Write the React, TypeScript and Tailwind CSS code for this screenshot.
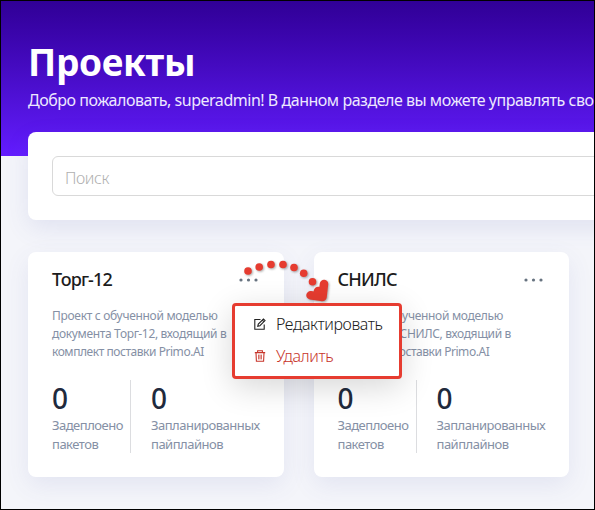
import type { ReactNode } from "react";

function Dots() {
  return (
    <svg width="19" height="4" viewBox="0 0 19 4" className="mt-[26px] shrink-0" fill="#677380">
      <circle cx="2" cy="2" r="1.6" />
      <circle cx="9.5" cy="2" r="1.6" />
      <circle cx="17" cy="2" r="1.6" />
    </svg>
  );
}

function EditIcon() {
  return (
    <svg width="12" height="12" viewBox="0 0 12 12" className="shrink-0" fill="none" stroke="#222" strokeWidth="1.1">
      <path d="M6.5 1.5H.8v9.8h9.4V6.5" />
      <path d="M3.8 8.2l.5-2.1L9.4 1l1.6 1.6L5.9 7.7z" />
      <path d="M8.3 2.1l1.6 1.6" />
    </svg>
  );
}

function TrashIcon() {
  return (
    <svg width="12" height="12" viewBox="0 0 12 12" className="shrink-0" fill="none" stroke="#c7352b" strokeWidth="1.1">
      <path d="M.8 2.6h10.4M3.6 2.4V.8h4.8v1.6M2 2.8l.4 8.4h7.2l.4-8.4" />
      <path d="M4.6 4.6v4.8M6 4.6v4.8M7.4 4.6v4.8" strokeWidth=".8" />
    </svg>
  );
}

function Stat({ children }: { children: ReactNode }) {
  return (
    <div className="h-[73px]">
      <div className="h-9 text-[28px] leading-[36px] font-medium text-[#1f2a3d]">0</div>
      <div className="text-[13px] leading-[19px] tracking-[-0.5px] whitespace-nowrap text-[#8590a5]">{children}</div>
    </div>
  );
}

function Card({ title, doc }: { title: string; doc: string }) {
  return (
    <section className="h-[225px] w-[255.5px] shrink-0 rounded-lg bg-white pl-6 shadow-[0_8px_24px_rgba(80,90,170,0.1)]">
      <div className="flex h-[54px] justify-between pr-[26px]">
        <h2 className="pt-[15px] text-[18px] leading-6 font-medium tracking-[-0.75px] text-[#1c1c1c]">{title}</h2>
        <Dots />
      </div>
      <p className="h-[74px] pt-px text-[12px] leading-[18px] tracking-[-0.3px] whitespace-nowrap text-[#8590a5]">
        Проект с обученной моделью
        <br />
        <span className="tracking-[-0.34px]">документа {doc}, входящий в</span>
        <br />
        <span className="tracking-[-0.45px]">комплект поставки Primo.AI</span>
      </p>
      <div className="flex">
        <div className="w-[79px] border-r border-[#dcdde0]">
          <Stat>
            Задеплоено
            <br />
            пакетов
          </Stat>
        </div>
        <div className="pl-5">
          <Stat>
            Запланированных
            <br />
            пайплайнов
          </Stat>
        </div>
      </div>
    </section>
  );
}

function Pointer() {
  const dots = [
    [248, 271],
    [259.2, 267],
    [271, 264.5],
    [283, 264.5],
    [294, 267.5],
    [303.7, 273.3],
    [312.5, 281.8],
  ];
  return (
    <svg
      width="100"
      height="50"
      viewBox="235 255 100 50"
      className="absolute top-[254px] left-[234px] drop-shadow-[1px_1px_1px_rgba(60,60,60,0.45)]"
    >
      {dots.map(([x, y]) => (
        <circle key={x} cx={x} cy={y} r="3.8" fill="#e63c30" />
      ))}
      <path d="M324 284 L322.5 297 L310.5 295.3 M318 291 L322 297" fill="none" stroke="#e63c30" strokeWidth="8.5" strokeLinecap="round" strokeLinejoin="round" />
    </svg>
  );
}

export default function App() {
  return (
    <div className="relative h-[510px] w-[595px] overflow-hidden border border-black bg-[#f4f5fa] font-['Noto_Sans','Open_Sans',sans-serif]">
      <header className="h-[155px] bg-gradient-to-b from-[#300096] to-[#631cff] pt-[35px] pl-[27px] text-white">
        <h1 className="h-[53px] text-[37px] leading-[52px] font-bold tracking-[-0.3px]">Проекты</h1>
        <p className="text-[16px] leading-[22px] tracking-[-0.47px] whitespace-nowrap text-[#ede8ff]">
          Добро пожаловать, superadmin! В данном разделе вы можете управлять своими проектами
        </p>
      </header>
      <div className="-mt-6 ml-[27px] h-[88px] w-[640px] rounded-lg bg-white p-6 shadow-[0_8px_24px_rgba(80,90,170,0.12)]">
        <div className="h-10 rounded-md border border-[#d9d9d9] pl-3 text-[16px] leading-[42px] font-light tracking-[-0.4px] text-[#b0b0b0]">
          Поиск
        </div>
      </div>
      <main className="mt-8 ml-[27px] flex gap-[30px]">
        <Card title="Торг-12" doc="Торг-12" />
        <Card title="СНИЛС" doc="СНИЛС" />
      </main>
      <Pointer />
      <div className="absolute top-[302px] left-[231px] h-[76px] w-[170px] rounded-[4px] border-[3px] border-[#e63c30] bg-white pt-[2px] pl-[19px] text-[16px] font-[350] tracking-[-0.4px] shadow-[0_8px_32px_rgba(0,0,0,0.16)]">
        <div className="flex h-8 items-center gap-[10px] text-[#202020]">
          <EditIcon />
          <span>Редактировать</span>
        </div>
        <div className="flex h-8 items-center gap-[10px] text-[#c7352b]">
          <TrashIcon />
          <span>Удалить</span>
        </div>
      </div>
    </div>
  );
}
